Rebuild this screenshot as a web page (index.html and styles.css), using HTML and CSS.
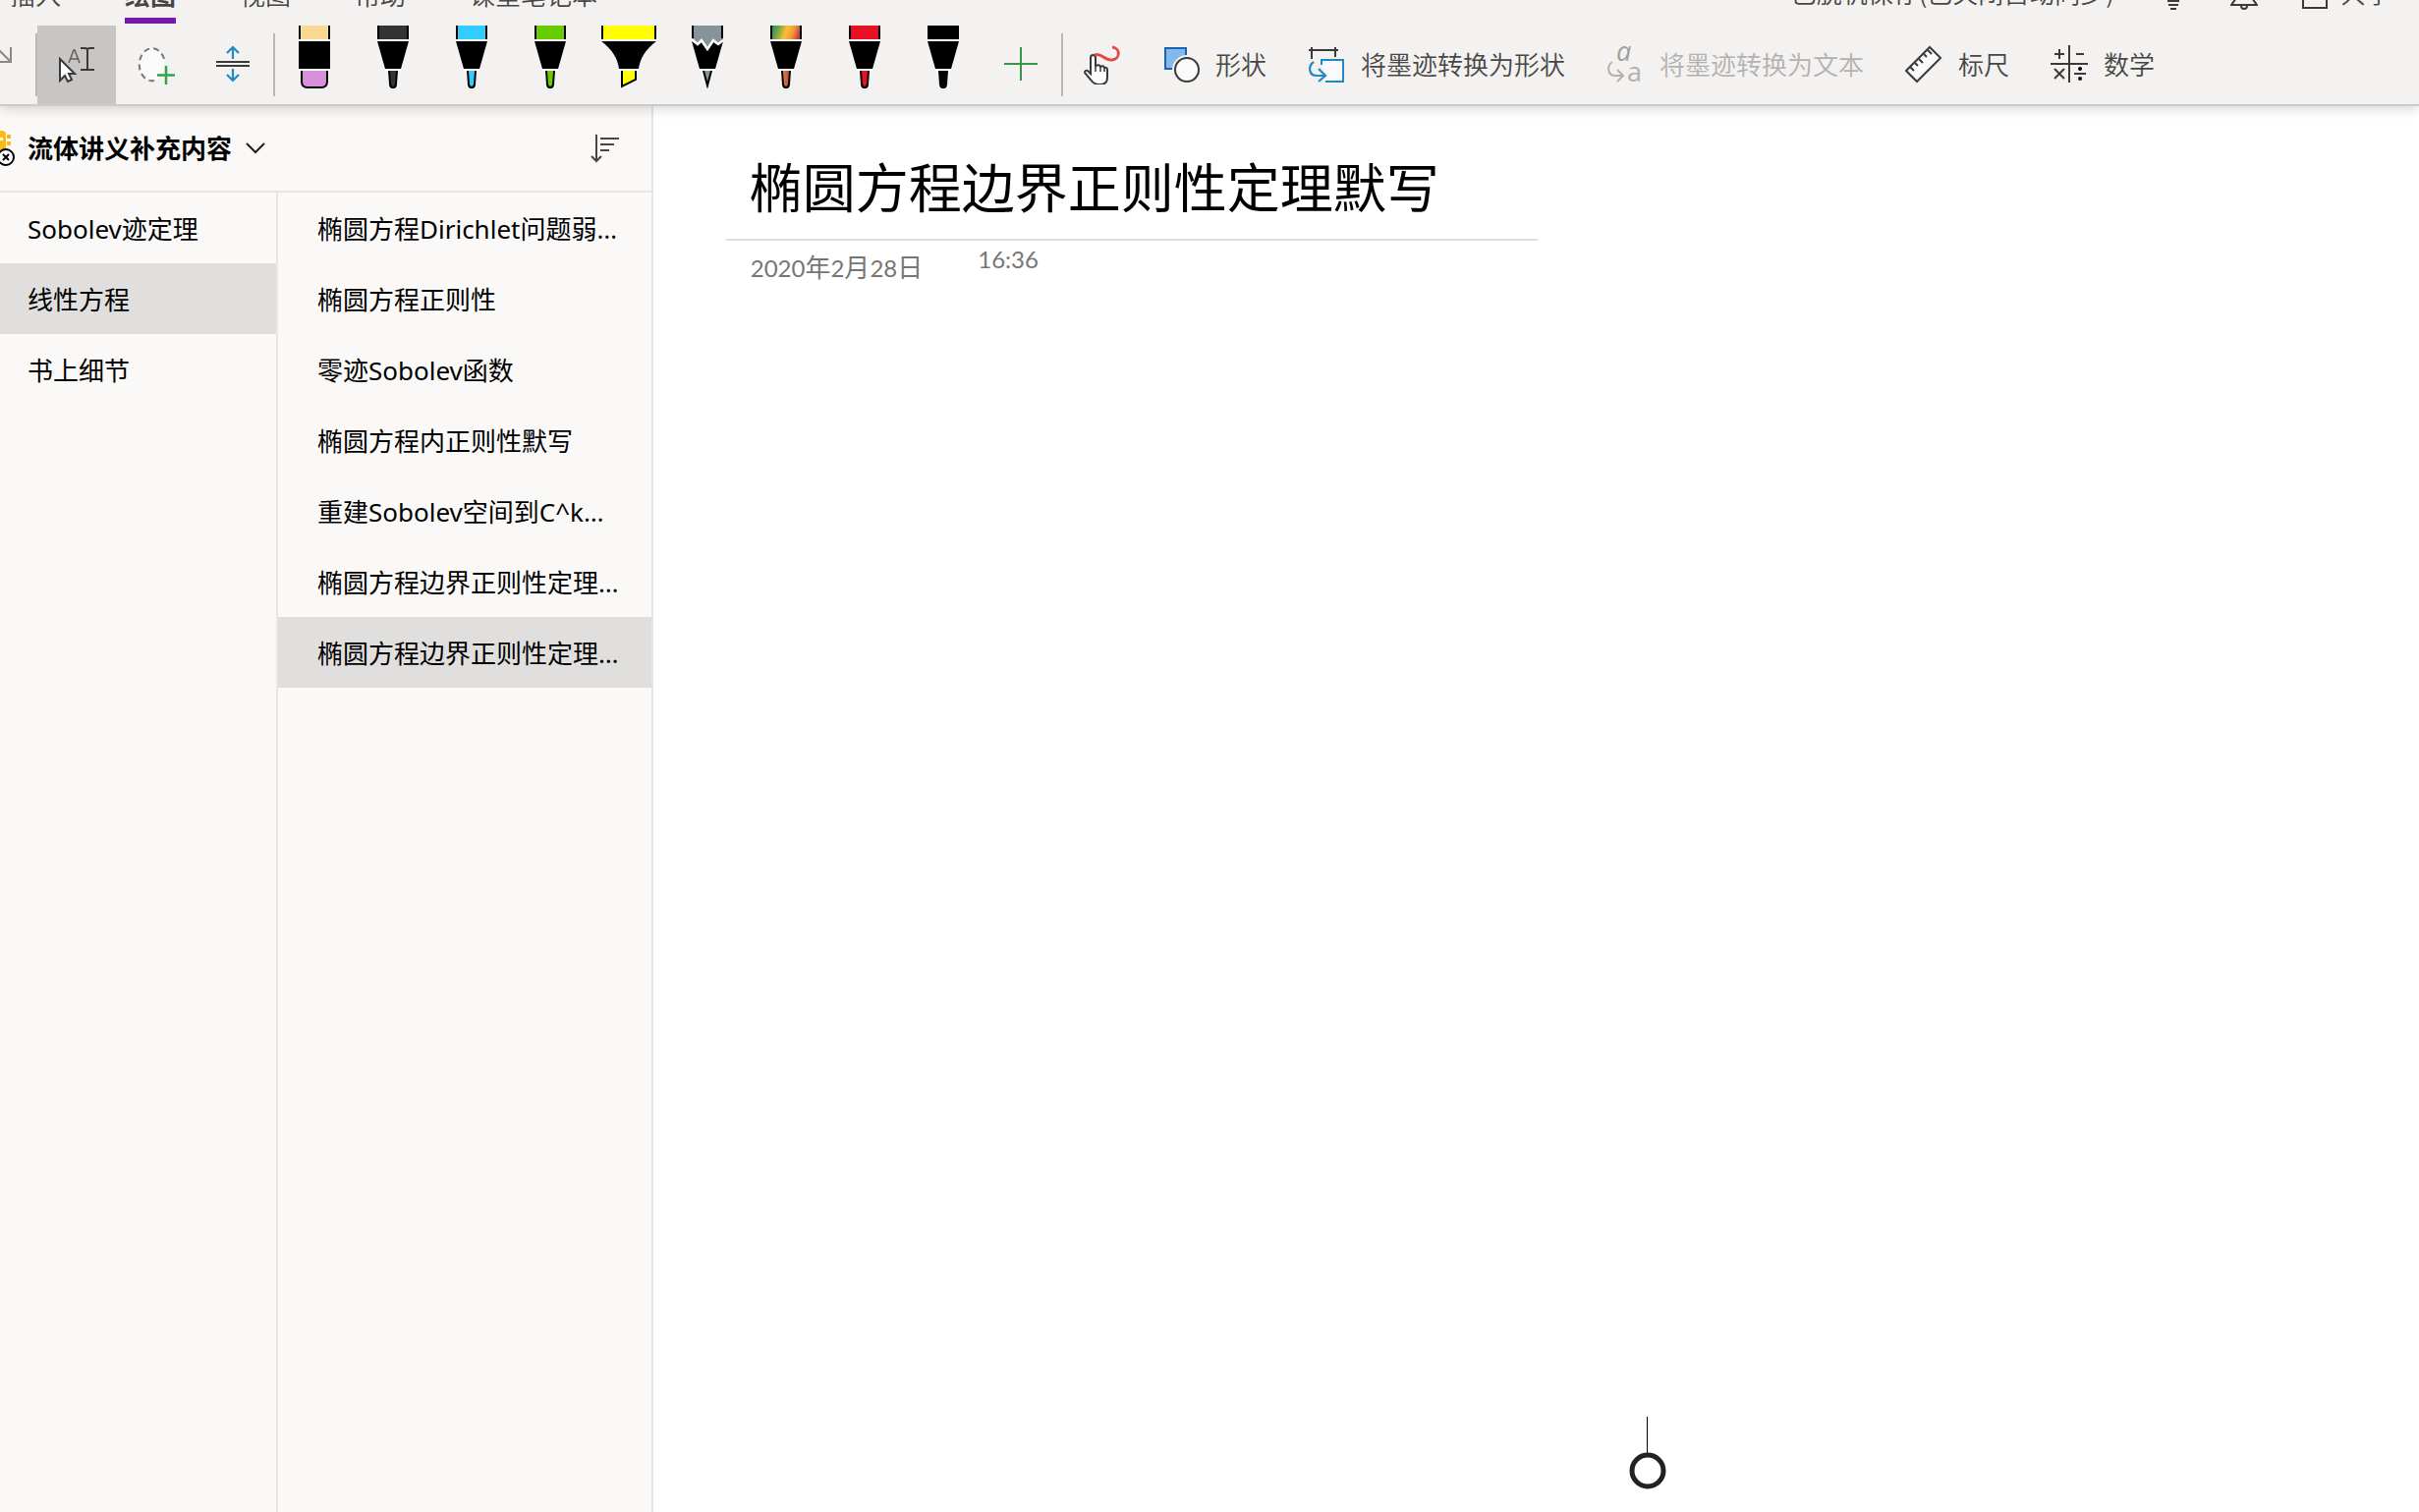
FILE: index.html
```html
<!DOCTYPE html>
<html lang="zh-CN">
<head>
<meta charset="utf-8">
<title>椭圆方程边界正则性定理默写</title>
<link rel="stylesheet" href="styles.css">
</head>
<body>
<svg class="defs" aria-hidden="true">
  <symbol id="pen" viewBox="0 0 32 64">
    <path class="ink" d="M0 0h32v14H0z"/>
    <path d="M0 0h2v14H0zM30 0h2v14h-2zM0 16h32l-8 28H8z"/>
    <path class="gap" d="M0 14h32v2H0zM8 44h16v2H8z"/>
    <path class="ink edge" d="M12 46l1 14q.4 3 3 3t3-3l1-14"/>
  </symbol>
</svg>

<header class="ribbon">
  <div class="topbar">
    <nav class="tabs">
      <a class="tab" href="#insert">插入</a>
      <a class="tab active" href="#draw">绘图</a>
      <a class="tab" href="#view">视图</a>
      <a class="tab" href="#help">帮助</a>
      <a class="tab" href="#class">课堂笔记本</a>
    </nav>
    <div class="status">
      <span class="saved">已脱机保存(已关闭自动同步)</span>
      <button class="top-btn" aria-label="提示"><svg width="28" height="26" viewBox="0 0 28 26"><path class="line" d="M9 14v3h10v-3M9 21h10M11 25h6"/></svg></button>
      <button class="top-btn" aria-label="通知"><svg width="28" height="26" viewBox="0 0 28 26"><path class="line" d="M6 4v10L1 21h26l-5-7V4M11 22q0 3 3 3t3-3"/></svg></button>
      <button class="top-btn share"><svg width="28" height="26" viewBox="0 0 28 26"><path class="line" d="M2 4v20h24V4"/></svg><span>共享</span></button>
    </div>
  </div>

  <div class="toolbar">
    <button class="tool first" aria-label="重做"><svg width="16" height="40" viewBox="0 46 16 40"><path class="soft" d="M-4 48L11 63M11 48v15H-2"/></svg></button>
    <span class="rule"></span>
    <button class="tool selected" aria-label="选择对象或键入文本"><svg width="40" height="40" viewBox="58 46 40 40"><path d="M61 60v22l5-5 3 6 4-2-3-6h6z" fill="#fff" stroke="#3b3a39" stroke-width="2"/><path d="M70 64l5-13h1l5 13M72 60h7" fill="none" stroke="#605e5c" stroke-width="1.5"/><path class="line" d="M82 49h5l2 1 2-1h5M89 49v22M82 71h14"/></svg></button>
    <button class="tool" aria-label="套索选择"><svg width="40" height="40" viewBox="138 46 40 40"><ellipse cx="154.500" cy="65.500" rx="13" ry="16.500" fill="#fafafa"/><path d="M167 60a13 16.500 0 1 0-10 22" fill="none" stroke="#797775" stroke-width="2" stroke-dasharray="6 4"/><path d="M169 67v19M160 76.500h18" stroke="#32a24b" stroke-width="2.500"/></svg></button>
    <button class="tool" aria-label="插入空间"><svg width="40" height="40" viewBox="218 46 40 40"><path d="M220 63h34M220 67h34" stroke="#3b3a39" stroke-width="2"/><path d="M237 60V48M231 54l6-6 6 6M237 70v12M231 76l6 6 6-6" fill="none" stroke="#2488c8" stroke-width="2.200"/></svg></button>
    <span class="rule"></span>

    <button class="tool pen" aria-label="橡皮擦"><svg width="32" height="64" viewBox="0 0 32 64"><path fill="#f9d890" d="M0 0h32v14H0z"/><path d="M0 0h2v14H0zM30 0h2v14h-2zM0 16h32v28H0z"/><path class="gap" d="M0 14h32v2H0zM0 44h32v2H0z"/><path class="edge" fill="#d68fd9" d="M3 46v11q0 6 6 6h14q6 0 6-6V46"/></svg></button>
    <button class="tool pen dark" aria-label="深灰色笔"><svg width="32" height="64"><use href="#pen"/></svg></button>
    <button class="tool pen sky" aria-label="天蓝色笔"><svg width="32" height="64"><use href="#pen"/></svg></button>
    <button class="tool pen green" aria-label="绿色笔"><svg width="32" height="64"><use href="#pen"/></svg></button>
    <button class="tool pen" aria-label="黄色荧光笔"><svg width="56" height="64" viewBox="0 0 56 64"><path fill="#ff0" d="M0 0h56v14H0z"/><path d="M0 0h2v14H0zM54 0h2v14h-2zM0 16h56Q40 28 38 44H18Q16 28 0 16z"/><path class="gap" d="M0 14h56v2H0zM18 44h20v2H18z"/><path class="edge" fill="#ff0" d="M21 46v16l14-7v-9"/></svg></button>
    <button class="tool pen" aria-label="铅笔"><svg width="32" height="64" viewBox="0 0 32 64"><path fill="#84949a" d="M0 0h32v17l-5 1-4-1-7 7-6-7-4 2-6-4z"/><path d="M0 0h2v13H0zM30 0h2v13h-2zM0 16l6 4 4-3 6 8 6-8 5 3 5-4-8 28H8z"/><path d="M0 14l6 5 4-4 6 9 6-9 5 4 5-4" fill="none" stroke="#fff" stroke-width="2.500"/><path class="gap" d="M8 44h16v2H8z"/><path class="edge" fill="#84949a" d="M12 46l4 15 4-15"/></svg></button>
    <button class="tool pen" aria-label="彩虹笔"><svg width="32" height="64" viewBox="0 0 32 64"><defs><linearGradient id="rainbow" x1="0" y1="0" x2="1" y2=".15"><stop offset=".08" stop-color="#159a62"/><stop offset=".3" stop-color="#7aa544"/><stop offset=".55" stop-color="#fbc037"/><stop offset=".78" stop-color="#ef9a38"/><stop offset="1" stop-color="#c83f3c"/></linearGradient><linearGradient id="lava"><stop offset="0" stop-color="#e08a45"/><stop offset="1" stop-color="#b8453a"/></linearGradient></defs><path fill="url(#rainbow)" d="M0 0h32v14H0z"/><path d="M0 0h2v14H0zM30 0h2v14h-2zM0 16h32l-8 28H8z"/><path class="gap" d="M0 14h32v2H0zM8 44h16v2H8z"/><path class="edge" fill="url(#lava)" d="M12 46l1 14q.4 3 3 3t3-3l1-14"/></svg></button>
    <button class="tool pen red" aria-label="红色笔"><svg width="32" height="64"><use href="#pen"/></svg></button>
    <button class="tool pen black" aria-label="黑色笔"><svg width="32" height="64"><use href="#pen"/></svg></button>
    <button class="tool" aria-label="添加笔"><svg width="40" height="40" viewBox="0 0 40 40"><path d="M19 2v34M2 19h34" stroke="#32964b" stroke-width="2"/></svg></button>
    <span class="rule"></span>

    <button class="tool" aria-label="用手指绘图"><svg width="40" height="40" viewBox="1102 46 40 40"><path d="M1110 75V59q0-3 2.500-3t2.500 3v8q4-2 5 1 3-2 4 1 3-1 3 2v8q0 7-8 7-6 0-9-5l-6-7q0-3 3-2z" fill="#fff" stroke="#3b3a39" stroke-width="2"/><path d="M1115 66v7M1120 68v5M1124 69v4" stroke="#3b3a39" stroke-width="1.500"/><path d="M1114 56c7-3 10 6 18 5 8-1 9-12 0-13" fill="none" stroke="#e04848" stroke-width="2.800"/></svg></button>
    <button class="tool label"><svg width="40" height="40" viewBox="1182 46 40 40"><path d="M1185 49h21v21h-21z" fill="#83b9ec" stroke="#1467b0" stroke-width="2"/><circle cx="1207" cy="71" r="15" fill="#f3f2f1"/><circle cx="1207" cy="71" r="12" fill="#fafafa" stroke="#3b3a39" stroke-width="2"/></svg><span>形状</span></button>
    <button class="tool label"><svg width="40" height="40" viewBox="1331 46 40 40"><path class="line" d="M1332 51h30M1335 48v12M1359 48v10"/><path d="M1345 66v-5h22v22h-18" fill="#fafafa" stroke="#2488c8" stroke-width="2"/><path d="M1337 63c-6 4-5 14 3 14h8M1342 70l7 7-7 6" fill="none" stroke="#2488c8" stroke-width="2.200"/></svg><span>将墨迹转换为形状</span></button>
    <button class="tool label" disabled><svg width="40" height="40" viewBox="1635 46 40 40"><text class="script-a" x="1645" y="62">a</text><text class="plain-a" x="1656" y="83">a</text><path d="M1641 63c-6 4-5 14 3 14h7M1646 71l6 6-6 6" fill="none" stroke="#b3b1af" stroke-width="2"/></svg><span>将墨迹转换为文本</span></button>
    <button class="tool label"><svg width="40" height="40" viewBox="1938 46 40 40"><path d="M1963 48l11 11-24 24-11-11z" fill="#fafafa" stroke="#3b3a39" stroke-width="2"/><path class="line" d="M1943 68l4 4M1948 64l3 3M1952 60l4 4M1957 55l3 3M1961 51l4 4"/></svg><span>标尺</span></button>
    <button class="tool label"><svg width="40" height="40" viewBox="2086 46 40 40"><path class="line" d="M2105 46v38M2086 65h38M2095 50v10M2090 55h10M2112 55h8M2090 70l10 10M2100 70l-10 10M2110 75h12"/><circle cx="2116" cy="70" r="2"/><circle cx="2116" cy="80" r="2"/></svg><span>数学</span></button>
  </div>
</header>

<div class="workspace">
  <aside class="sidebar">
    <div class="notebook">
      <button class="notebook-name">
        <svg class="book" width="16" height="40" viewBox="0 133 16 40"><path d="M0 135h2q4 0 4 4v16H0zM7 139h4v4H7zM7 146h4v4H7z" fill="#fdb813"/><path d="M0 142h3v3H0z" fill="#fff"/><circle cx="6" cy="162" r="8" fill="#fff" stroke="#000" stroke-width="2"/><path d="M3 159l6 6M9 159l-6 6" stroke="#000" stroke-width="2"/></svg>
        <span>流体讲义补充内容</span>
        <svg width="20" height="12" viewBox="0 0 20 12"><path d="M1 1l9 9 9-9" fill="none" stroke="#201f1e" stroke-width="2"/></svg>
      </button>
      <button class="sort" aria-label="排序"><svg width="30" height="32" viewBox="0 0 30 32"><path d="M6 2v27M1 24l5 5 5-5M10 6h19M10 12h14M10 18h9" fill="none" stroke="#484644" stroke-width="2"/></svg></button>
    </div>
    <div class="columns">
      <nav class="sections">
        <a class="row" href="#s1">Sobolev迹定理</a>
        <a class="row current" href="#s2">线性方程</a>
        <a class="row" href="#s3">书上细节</a>
      </nav>
      <nav class="pages">
        <a class="row" href="#p1">椭圆方程Dirichlet问题弱…</a>
        <a class="row" href="#p2">椭圆方程正则性</a>
        <a class="row" href="#p3">零迹Sobolev函数</a>
        <a class="row" href="#p4">椭圆方程内正则性默写</a>
        <a class="row" href="#p5">重建Sobolev空间到C^k…</a>
        <a class="row" href="#p6">椭圆方程边界正则性定理…</a>
        <a class="row current" href="#p7">椭圆方程边界正则性定理…</a>
      </nav>
    </div>
  </aside>

  <main class="canvas">
    <div class="page-head">
      <h1>椭圆方程边界正则性定理默写</h1>
    </div>
    <div class="stamp">
      <span class="date">2020<b>年</b>2<b>月</b>28<b>日</b></span>
      <span class="time">16:36</span>
    </div>
    <svg class="handle" width="40" height="76" viewBox="0 0 40 76"><path d="M19 0h1v37h-1z"/><circle cx="20" cy="55" r="16" fill="#fff" stroke="#222" stroke-width="5"/></svg>
  </main>
</div>
</body>
</html>
```
FILE: styles.css
```css
* { box-sizing: border-box; }

body {
  margin: 0;
  min-height: 100vh;
  display: flex;
  flex-direction: column;
  overflow: hidden;
  background: #fff;
  color: #000;
  font: 26px/36px "Noto Sans", "Noto Sans CJK SC", sans-serif;
}

button {
  margin: 0;
  padding: 0;
  border: 0;
  background: none;
  color: inherit;
  font: inherit;
}

a { color: inherit; text-decoration: none; }
svg { display: block; flex: none; }

.defs { position: absolute; width: 0; height: 0; }
.line { fill: none; stroke: #3b3a39; stroke-width: 2; }
.soft { fill: none; stroke: #8a8886; stroke-width: 2; }

/* Ribbon */
.ribbon {
  position: relative;
  z-index: 1;
  background: #f3f2f1;
  border-bottom: 2px solid #cccbca;
  box-shadow: 0 2px 12px rgba(0, 0, 0, .18);
  color: #484644;
  font-family: "Noto Sans CJK SC", sans-serif;
  font-weight: 350;
  white-space: nowrap;
}

.topbar {
  display: flex;
  justify-content: space-between;
  align-items: flex-end;
  height: 24px;
  margin-bottom: 2px;
  overflow: hidden;
}

.tabs { display: flex; gap: 65px; padding-left: 10px; }

.tab {
  padding-bottom: 6px;
  border-bottom: 6px solid transparent;
}

.tab.active {
  border-color: #7719aa;
  font-weight: 700;
}

.status {
  display: flex;
  align-items: flex-end;
  padding: 0 28px 14px 0;
}

.saved { margin-right: 46px; }
.top-btn { display: flex; align-items: flex-end; margin-right: 44px; }
.share { gap: 12px; margin-right: 0; }

.toolbar { display: flex; align-items: center; height: 80px; }

.rule { flex: none; width: 2px; height: 64px; background: #b8b7b6; }

.tool {
  display: flex;
  flex: none;
  align-items: center;
  justify-content: center;
  width: 80px;
  height: 80px;
}

.tool.first { width: 36px; justify-content: flex-start; }
.tool.selected { background: #c8c6c4; }
.tool.pen { align-items: flex-start; }
.tool.label { width: auto; gap: 14px; padding: 0 21px; }
.tool.label span { padding-bottom: 2px; }
.tool:disabled { color: #b3b1af; }

.script-a { font: italic 27px "Open Sans", sans-serif; fill: #a19f9d; }
.plain-a { font: 27px "Open Sans", sans-serif; fill: #b3b1af; }

.ink { fill: var(--ink); }
.gap { fill: #fff; }
.edge { stroke: #000; stroke-width: 2; }
.dark { --ink: #333; }
.sky { --ink: #33ccff; }
.green { --ink: #66cc00; }
.red { --ink: #e81123; }
.black { --ink: #000; }

/* Workspace */
.workspace { flex: 1; display: flex; }

.sidebar {
  flex: none;
  display: flex;
  flex-direction: column;
  width: 27%;
  background: #faf9f8;
  border-right: 2px solid #e6e5e4;
}

.notebook {
  display: flex;
  align-items: center;
  justify-content: space-between;
  height: 88px;
  padding-right: 32px;
  border-bottom: 2px solid #e8e7e6;
}

.notebook-name {
  display: flex;
  align-items: center;
  gap: 14px;
  font-weight: 700;
}
.notebook-name .book { margin-right: -2px; }

.columns { flex: 1; display: flex; }
.sections { width: 283px; border-right: 2px solid #e8e7e6; }
.pages { flex: 1; min-width: 0; }

.row {
  display: block;
  padding: 19px 28px 17px;
  overflow: hidden;
  white-space: nowrap;
}
.pages .row { padding-left: 40px; padding-right: 0; }
.row.current { background: #e0dfde; }

.canvas {
  position: relative;
  flex: 1;
  padding: 34px 74px;
}

.page-head {
  width: 826px;
  padding: 14px 24px 21px;
  border-bottom: 2px solid #dcdcdc;
}

h1 {
  margin: 0;
  font: 400 54px/66px "Noto Sans CJK SC", sans-serif;
  white-space: nowrap;
}

.stamp {
  display: flex;
  gap: 56px;
  padding: 1px 25px;
  color: #767676;
  font: 24px/36px Lato, "Noto Sans CJK SC", sans-serif;
}
.date { padding-top: 8px; }
.date b { font-size: 26px; font-weight: 400; }

/* Ink selection handle floating on the page */
.handle { position: absolute; right: 765px; bottom: 21px; }
```
